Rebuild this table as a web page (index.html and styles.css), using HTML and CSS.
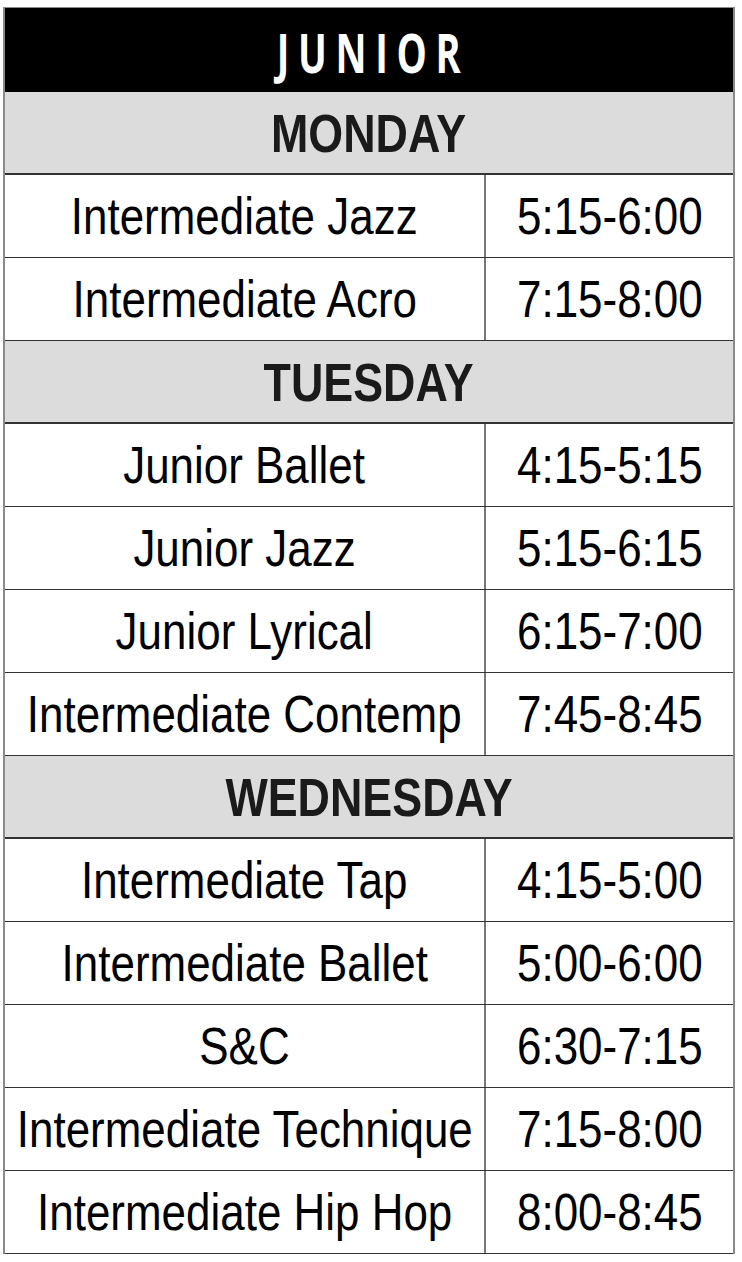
FILE: index.html
```html
<!DOCTYPE html>
<html lang="en">
<head>
<meta charset="utf-8">
<title>Junior Schedule</title>
<link rel="stylesheet" href="styles.css">
</head>
<body>
<div class="schedule">
  <div class="title"><span class="narrow-title">JUNIOR</span></div>
  <div class="day"><span class="narrow">MONDAY</span></div>
  <div class="row"><div class="cls"><span class="narrow">Intermediate Jazz</span></div><div class="time"><span class="narrow">5:15-6:00</span></div></div>
  <div class="row"><div class="cls"><span class="narrow">Intermediate Acro</span></div><div class="time"><span class="narrow">7:15-8:00</span></div></div>
  <div class="day"><span class="narrow">TUESDAY</span></div>
  <div class="row"><div class="cls"><span class="narrow">Junior Ballet</span></div><div class="time"><span class="narrow">4:15-5:15</span></div></div>
  <div class="row"><div class="cls"><span class="narrow">Junior Jazz</span></div><div class="time"><span class="narrow">5:15-6:15</span></div></div>
  <div class="row"><div class="cls"><span class="narrow">Junior Lyrical</span></div><div class="time"><span class="narrow">6:15-7:00</span></div></div>
  <div class="row"><div class="cls"><span class="narrow">Intermediate Contemp</span></div><div class="time"><span class="narrow">7:45-8:45</span></div></div>
  <div class="day"><span class="narrow">WEDNESDAY</span></div>
  <div class="row"><div class="cls"><span class="narrow">Intermediate Tap</span></div><div class="time"><span class="narrow">4:15-5:00</span></div></div>
  <div class="row"><div class="cls"><span class="narrow">Intermediate Ballet</span></div><div class="time"><span class="narrow">5:00-6:00</span></div></div>
  <div class="row"><div class="cls"><span class="narrow">S&amp;C</span></div><div class="time"><span class="narrow">6:30-7:15</span></div></div>
  <div class="row"><div class="cls"><span class="narrow">Intermediate Technique</span></div><div class="time"><span class="narrow">7:15-8:00</span></div></div>
  <div class="row"><div class="cls"><span class="narrow">Intermediate Hip Hop</span></div><div class="time"><span class="narrow">8:00-8:45</span></div></div>
</div>
</body>
</html>
```

FILE: styles.css
```css
html, body {
  margin: 0;
  padding: 0;
  background: #ffffff;
}

.schedule {
  margin: 7px 0 0 3px;
  width: 732px;
  border-left: 2px solid #8a8a8a;
  border-right: 2px solid #8a8a8a;
  border-top: 1px solid #8a8a8a;
  box-sizing: border-box;
  font-family: "Liberation Sans", Arial, sans-serif;
  color: #000;
}

.narrow {
  display: inline-block;
  white-space: nowrap;
  transform: scaleX(0.845);
  line-height: 1;
}

.title {
  height: 84px;
  background: #000;
  color: #fff;
  display: flex;
  align-items: center;
  justify-content: center;
  padding-top: 4px;
  box-sizing: border-box;
}

.narrow-title {
  display: inline-block;
  white-space: nowrap;
  font-family: "Open Sans", "Liberation Sans", sans-serif;
  font-weight: 700;
  font-size: 53px;
  line-height: 1;
  letter-spacing: 12px;
  padding-left: 12px;
  transform: scaleX(0.72);
}

.day {
  height: 83px;
  background: #dcdcdc;
  border-bottom: 2px solid #333;
  box-sizing: border-box;
  display: flex;
  align-items: center;
  justify-content: center;
  font-weight: 700;
  font-size: 54px;
  color: #1a1a1a;
}

.day .narrow {
  transform: scaleX(0.83);
}

.row {
  height: 83px;
  display: grid;
  grid-template-columns: 481px 1fr;
  border-bottom: 1px solid #333;
  box-sizing: border-box;
}

.cls, .time {
  display: flex;
  align-items: center;
  justify-content: center;
  font-size: 52px;
}

.cls {
  border-right: 2px solid #777;
}
```
